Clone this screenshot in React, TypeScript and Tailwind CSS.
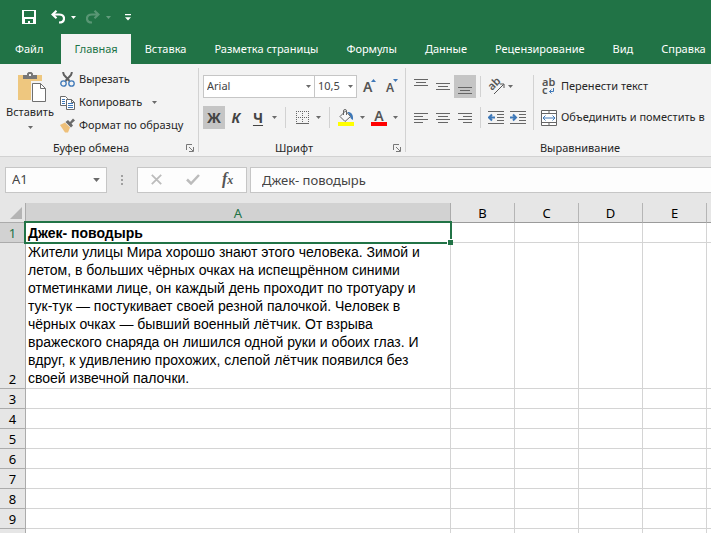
import type { ReactNode } from "react";

const tabs = [
  "Файл",
  "Главная",
  "Вставка",
  "Разметка страницы",
  "Формулы",
  "Данные",
  "Рецензирование",
  "Вид",
  "Справка",
];

const columns = ["A", "B", "C", "D", "E", "F"];
const emptyRows = [3, 4, 5, 6, 7, 8, 9, 10];

const title = "Джек- поводырь";
const story = `Жители улицы Мира хорошо знают этого человека. Зимой и
летом, в больших чёрных очках на испещрённом синими
отметинками лице, он каждый день проходит по тротуару и
тук-тук — постукивает своей резной палочкой. Человек в
чёрных очках — бывший военный лётчик. От взрыва
вражеского снаряда он лишился одной руки и обоих глаз. И
вдруг, к удивлению прохожих, слепой лётчик появился без
своей извечной палочки.`;

export default function App() {
  return (
    <div className="flex h-screen flex-col overflow-hidden bg-[#e6e6e6] font-['Noto_Sans',sans-serif] text-[11px] text-[#262626]">
      <TitleBar />
      <Tabs />
      <div className="flex h-[93px] shrink-0 overflow-hidden border-b border-[#d2d2d2] bg-[#f3f3f3] py-1">
        <ClipboardGroup />
        <FontGroup />
        <AlignGroup />
      </div>
      <FormulaBar />
      <Sheet />
    </div>
  );
}

const TitleBar = () => (
  <header className="flex h-[34px] shrink-0 items-center bg-[#217346] pl-[22px] text-white">
    <button aria-label="Сохранить">
      <svg width="14" height="14" viewBox="0 0 14 14" shapeRendering="crispEdges">
        <path
          fill="currentColor"
          fillRule="evenodd"
          d="M0 0h14v14H0zM2 1v6h10V1zM3 9v4h3v-2h2v2h3V9z"
        />
      </svg>
    </button>
    <button aria-label="Отменить" className="ml-[15px]">
      <UndoIcon />
    </button>
    <button aria-label="Список отмены" className="ml-1.5">
      <Caret />
    </button>
    <button aria-label="Вернуть" className="ml-[10px] opacity-25">
      <UndoIcon className="-scale-x-100" />
    </button>
    <button aria-label="Список возврата" className="ml-1.5 opacity-30">
      <Caret />
    </button>
    <button aria-label="Настройка панели" className="ml-[14px]">
      <svg width="6" height="7" viewBox="0 0 6 7">
        <path fill="currentColor" d="M0 0h6v1.2H0zM0 3.2h6L3 6.4z" />
      </svg>
    </button>
  </header>
);

const Tabs = () => (
  <nav className="flex h-[30px] shrink-0 overflow-hidden bg-[#217346] pl-px">
    {tabs.map((tab) => (
      <a
        key={tab}
        href="#"
        className={
          tab === "Главная"
            ? "ml-1 flex shrink-0 items-center bg-[#f3f3f3] px-[13px] text-[#217346]"
            : "flex shrink-0 items-center px-3.5 text-white"
        }
      >
        {tab}
      </a>
    ))}
  </nav>
);

const ClipboardGroup = () => (
  <Group label="Буфер обмена" className="w-[199px]" launcher>
    <div className="flex">
      <button className="flex w-[60px] flex-col items-center pt-1">
        <svg width="28" height="30" viewBox="0 0 28 30" className="ml-1">
          <path fill="#eec77f" d="M0 3h24v25H0z" />
          <path fill="#777" d="M5 3h4V1.500L10.500 0h3L15 1.500V3h4v4H5z" />
          <path fill="#f3f3f3" d="M11 2h2v2h-2zM13 9h15v21H13z" />
          <path fill="#fff" stroke="#6f6f6f" d="M14.500 11.500h8l5 5v13h-13z" />
          <path fill="none" stroke="#6f6f6f" d="M22.500 11.500v5h5" />
        </svg>
        <span className="mt-0.5 leading-4">Вставить</span>
        <Caret className="mt-1.5 text-[#6a6a6a]" />
      </button>
      <div className="flex flex-col">
        <button className="flex h-[23px] items-center gap-1">
          <svg width="15" height="15" viewBox="0 0 15 15" fill="none">
            <path stroke="#5f5f5f" strokeWidth="2" d="M3 0l1 3 5.500 6M12 0l-1 3-5.500 6" />
            <circle cx="3.500" cy="11.500" r="2.700" stroke="#3e78b8" strokeWidth="1.300" />
            <circle cx="11.500" cy="11.500" r="2.700" stroke="#3e78b8" strokeWidth="1.300" />
          </svg>
          Вырезать
        </button>
        <button className="flex h-[23px] items-center gap-1">
          <svg width="15" height="14" viewBox="0 0 15 14" fill="#fff">
            <path stroke="#6a6a6a" d="M.5.500h5l2 2v7h-7z" />
            <path stroke="#3e78b8" d="M2 3.500h3M2 5.500h3M2 7.500h3" />
            <path stroke="#6a6a6a" d="M6.500 3.500h5l3 3v7h-8z" />
            <path fill="none" stroke="#6a6a6a" d="M11.500 3.500v3h3" />
            <path stroke="#3e78b8" d="M8 7.500h5M8 9.500h5M8 11.500h5" />
          </svg>
          Копировать
          <Caret className="ml-1.5 text-[#6a6a6a]" />
        </button>
        <button className="flex h-[23px] items-center gap-1">
          <svg width="15" height="15" viewBox="0 0 15 15">
            <path fill="#eec07a" d="M0 7l5-2.500 5 5L8 14.500H5z" />
            <path fill="#6a6a6a" d="M5.500 4L8 2l2 2 3-3.500L15 2.500 11.500 5.500l1.500 2-2 2z" />
          </svg>
          Формат по образцу
        </button>
      </div>
    </div>
  </Group>
);

const FontGroup = () => (
  <Group label="Шрифт" className="w-[207px]" launcher>
    <div className="mt-[7px] ml-1 flex h-[23px] items-center">
      <Picker label="Шрифт" value="Arial" className="w-[112px]" />
      <Picker label="Размер шрифта" value="10,5" className="-ml-px w-[43px]" />
      <button aria-label="Увеличить размер" className="ml-1.5 text-[#555]">
        <svg width="14" height="17" viewBox="0 0 14 17" className="overflow-visible">
          <text x="0" y="14" fontSize="14" fontWeight="600" fill="currentColor">
            A
          </text>
          <path fill="#3e78b8" d="M8 4h5l-2.500-3z" />
        </svg>
      </button>
      <button aria-label="Уменьшить размер" className="ml-[9px] text-[#555]">
        <svg width="13" height="17" viewBox="0 0 13 17" className="overflow-visible">
          <text x="0" y="14" fontSize="12" fontWeight="600" fill="currentColor">
            A
          </text>
          <path fill="#3e78b8" d="M7 1h5L9.500 4z" />
        </svg>
      </button>
    </div>
    <div className="mt-2 ml-1 flex h-[23px] items-center text-[14px] font-bold text-[#444]">
      <button className="h-[23px] w-[22px] bg-[#c5c5c5]">Ж</button>
      <button className="w-[22px] italic">К</button>
      <button className="w-[22px] underline underline-offset-2">Ч</button>
      <CaretButton label="Вид подчёркивания" />
      <Divider className="mx-[5px]" />
      <IconButton label="Границы">
        <svg width="13" height="13" viewBox="0 0 13 13" fill="none" stroke="#666">
          <path strokeDasharray="1 1" d="M0 .5h13M0 6.500h13M.5 0v13M6.500 0v13M12.500 0v13" />
          <path d="M0 12.500h13" />
        </svg>
      </IconButton>
      <CaretButton label="Виды границ" />
      <Divider className="mx-[5px]" />
      <IconButton label="Цвет заливки">
        <svg width="16" height="17" viewBox="0 0 16 17">
          <path fill="#3e78b8" d="M9.500 3c4 0 6 2.500 5.500 8-2-1-3-2.500-3-4z" />
          <path fill="#f8f8f8" stroke="#666" d="M2 7.500L7.500 2l5 5.500-5.500 5z" />
          <path fill="none" stroke="#666" d="M5.500 6V2q0-1.500 1.500-1.500T8.500 2v4" />
          <path fill="#ff0" d="M0 13h16v4H0z" />
        </svg>
      </IconButton>
      <CaretButton label="Цвета заливки" />
      <IconButton label="Цвет текста">
        <svg width="16" height="17" viewBox="0 0 16 17" className="overflow-visible">
          <text x="8" y="12" fontSize="14" fontWeight="600" textAnchor="middle" fill="#555">
            A
          </text>
          <path fill="red" d="M0 13h16v4H0z" />
        </svg>
      </IconButton>
      <CaretButton label="Цвета текста" />
    </div>
  </Group>
);

const AlignGroup = () => (
  <Group label="Выравнивание" className="w-[349px]">
    <div className="mt-[7px] ml-1 flex">
      <div>
        <div className="flex h-[23px] items-center">
          <IconButton label="По верхнему краю">
            <Lines d="M0 .5h14M2 3.500h10M0 6.500h14" className="mb-2" />
          </IconButton>
          <IconButton label="По середине">
            <Lines d="M0 .5h14M2 3.500h10M0 6.500h14" />
          </IconButton>
          <IconButton label="По нижнему краю" active>
            <Lines d="M0 .5h14M2 3.500h10M0 6.500h14" className="mt-2" />
          </IconButton>
          <Divider className="mx-1" />
          <IconButton label="Ориентация">
            <svg width="18" height="16" viewBox="0 0 18 16" fill="none" stroke="#555" className="overflow-visible">
              <text
                fontSize="11"
                fontWeight="600"
                stroke="none"
                fill="#555"
                transform="translate(5 12) rotate(-45)"
              >
                ab
              </text>
              <path d="M7 15L16.500 5.500M13 5h4v4" />
            </svg>
          </IconButton>
          <Caret className="ml-px text-[#6a6a6a]" />
        </div>
        <div className="mt-2 flex h-[23px] items-center">
          <IconButton label="По левому краю">
            <Lines d="M0 .5h14M0 3.500h9M0 6.500h14M0 9.500h9" />
          </IconButton>
          <IconButton label="По центру">
            <Lines d="M0 .5h14M2 3.500h10M0 6.500h14M2 9.500h10" />
          </IconButton>
          <IconButton label="По правому краю">
            <Lines d="M0 .5h14M5 3.500h9M0 6.500h14M5 9.500h9" />
          </IconButton>
          <Divider className="mx-1" />
          <IconButton label="Уменьшить отступ">
            <svg width="16" height="13" viewBox="0 0 16 13" fill="none" stroke="#666">
              <path d="M0 .5h16M9 3.500h7M9 6.500h7M9 9.500h7M0 12.500h16" />
              <path stroke="#3e78b8" strokeWidth="2" d="M7 6.500H1.500M4 3.500l-3 3 3 3" />
            </svg>
          </IconButton>
          <IconButton label="Увеличить отступ">
            <svg width="16" height="13" viewBox="0 0 16 13" fill="none" stroke="#666">
              <path d="M0 .5h16M9 3.500h7M9 6.500h7M9 9.500h7M0 12.500h16" />
              <path stroke="#3e78b8" strokeWidth="2" d="M0 6.500h5.500M3 3.500l3 3-3 3" />
            </svg>
          </IconButton>
        </div>
      </div>
      <div className="ml-1 h-[55px] w-px bg-[#d2d2d2]" />
      <div className="ml-[7px] whitespace-nowrap">
        <button className="flex h-[23px] items-center gap-1">
          <svg width="16" height="17" viewBox="0 0 16 17" fill="none" className="overflow-visible">
            <text fontSize="11" fontWeight="600" fill="#555">
              <tspan x="1" y="8">ab</tspan>
              <tspan x="1" y="16">c</tspan>
            </text>
            <path stroke="#3e78b8" d="M12.500 10v3.500H8.500M10.500 11.500l-2 2 2 2" />
          </svg>
          Перенести текст
        </button>
        <button className="mt-2 flex h-[23px] items-center gap-1">
          <svg width="16" height="16" viewBox="0 0 16 16" fill="none" stroke="#666">
            <path fill="#fff" d="M.5.500h15v15H.5z" />
            <path d="M0 3.500h16M0 12.500h16M8 0v4M8 12v4" />
            <path stroke="#3e78b8" d="M2.500 8h11M4.500 5.500L2 8l2.500 2.500M11.500 5.500L14 8l-2.500 2.500" />
          </svg>
          Объединить и поместить в
        </button>
      </div>
    </div>
  </Group>
);

const FormulaBar = () => (
  <div className="flex h-[46px] shrink-0 items-center pb-px pl-[5px] text-[13px] text-[#444]">
    <div className="flex h-[26px] w-[102px] shrink-0 items-center border border-[#c6c6c6] bg-[#fdfdfd] px-1.5">
      <input aria-label="Имя ячейки" defaultValue="A1" className="w-full min-w-0 outline-none" />
      <button aria-label="Список имён" className="text-[#6a6a6a]">
        <Caret big />
      </button>
    </div>
    <svg width="2" height="10" viewBox="0 0 2 10" className="ml-3.5 shrink-0">
      <path fill="#a0a0a0" d="M0 0h2v2H0zM0 4h2v2H0zM0 8h2v2H0z" />
    </svg>
    <div className="ml-3.5 flex h-[26px] w-[110px] shrink-0 items-center border border-[#c6c6c6] bg-[#fdfdfd]">
      <button aria-label="Отмена" className="ml-[13px] text-[#bcbcbc]">
        <svg width="11" height="11" viewBox="0 0 11 11">
          <path stroke="currentColor" strokeWidth="1.800" d="M.8.800l9.400 9.400M10.200.800L.8 10.200" />
        </svg>
      </button>
      <button aria-label="Ввод" className="ml-6 text-[#bcbcbc]">
        <svg width="14" height="11" viewBox="0 0 14 11">
          <path fill="none" stroke="currentColor" strokeWidth="2.500" d="M1 5.500l4 4L13 1" />
        </svg>
      </button>
      <button
        aria-label="Вставить функцию"
        className="ml-[22px] font-['Liberation_Serif',serif] text-[16px] leading-4 font-bold text-[#555] italic"
      >
        f<span className="text-[12px]">x</span>
      </button>
    </div>
    <input
      aria-label="Строка формул"
      defaultValue={title}
      className="ml-[3px] h-[26px] min-w-0 flex-1 border border-r-0 border-[#c6c6c6] bg-[#fdfdfd] px-[11px] outline-none"
    />
  </div>
);

const Sheet = () => (
  <table className="w-full shrink-0 table-fixed border-separate border-spacing-0 bg-white text-[13px] leading-4 text-black">
    <colgroup>
      <col className="w-[26px]" />
      <col className="w-[425px]" />
      <col className="w-16" />
      <col className="w-16" />
      <col className="w-16" />
      <col className="w-16" />
      <col />
    </colgroup>
    <thead>
      <tr className="h-5">
        <th className="border-r border-b border-[#ababab] bg-[#e6e6e6] p-0">
          <svg width="12" height="12" viewBox="0 0 12 12" className="mr-[3px] ml-auto">
            <path fill="#b4b4b4" d="M12 0v12H0z" />
          </svg>
        </th>
        {columns.map((col) => (
          <th
            key={col}
            scope="col"
            className={
              col === "A"
                ? "border-r border-b border-[#9b9b9b] border-r-[#ababab] bg-[#d2d2d2] p-0 font-normal text-[#217346]"
                : "border-r border-b border-[#9b9b9b] border-r-[#b5b5b5] bg-[#e6e6e6] p-0 font-normal last:border-r-0"
            }
          >
            {col === "F" ? "" : col}
          </th>
        ))}
      </tr>
    </thead>
    <tbody>
      <tr className="h-5">
        <RowHeader n={1} active />
        <td className="relative border-r border-b border-[#d4d4d4] p-0 pl-[2px] font-['Liberation_Sans',sans-serif] text-[14px] font-bold">
          {title}
          <div className="absolute -inset-0.5 border-2 border-[#217346]">
            <div className="absolute -right-[3px] -bottom-[3px] h-1.5 w-1.5 border-t border-l border-white bg-[#217346]" />
          </div>
        </td>
        <EmptyCells />
      </tr>
      <tr className="h-[146px]">
        <RowHeader n={2} />
        <td className="border-r border-b border-[#d4d4d4] p-0 pl-[2px] align-top font-['Liberation_Sans',sans-serif] text-[14px] leading-[18px] whitespace-pre-line">
          {story}
        </td>
        <EmptyCells />
      </tr>
      {emptyRows.map((n) => (
        <tr key={n} className="h-5">
          <RowHeader n={n} />
          <td className="border-r border-b border-[#d4d4d4] p-0" />
          <EmptyCells />
        </tr>
      ))}
    </tbody>
  </table>
);

const RowHeader = ({ n, active }: { n: number; active?: boolean }) => (
  <th
    scope="row"
    className={
      active
        ? "border-r border-b border-[#ababab] bg-[#d2d2d2] p-0 font-normal text-[#217346]"
        : "border-r border-b border-[#ababab] bg-[#e6e6e6] p-0 pb-px align-bottom font-normal"
    }
  >
    {n > 9 ? "" : n}
  </th>
);

const EmptyCells = () => (
  <>
    {columns.slice(1).map((col) => (
      <td key={col} className="border-r border-b border-[#d4d4d4] p-0 last:border-r-0" />
    ))}
  </>
);

type GroupProps = {
  label: string;
  className: string;
  launcher?: boolean;
  children: ReactNode;
};

const Group = ({ label, className, launcher, children }: GroupProps) => (
  <section className={`${className} flex shrink-0 flex-col border-r border-[#d2d2d2]`}>
    <div className="flex-1">{children}</div>
    <div className="-mb-1 flex h-4 shrink-0 items-center">
      <span className="flex-1 text-center leading-4">{label}</span>
      {launcher && (
        <button aria-label={`${label}: параметры`} className="mx-1">
          <svg width="8" height="8" viewBox="0 0 8 8" fill="none" stroke="#777">
            <path d="M.5 6V.5H6M3 3l4 4M7.500 3v4.500H3" />
          </svg>
        </button>
      )}
    </div>
  </section>
);

type PickerProps = { label: string; value: string; className: string };

const Picker = ({ label, value, className }: PickerProps) => (
  <div className={`${className} relative h-[23px] shrink-0`}>
    <select
      aria-label={label}
      className="h-full w-full appearance-none border border-[#c6c6c6] bg-white pl-[3px] text-[#444]"
    >
      <option>{value}</option>
    </select>
    <Caret className="pointer-events-none absolute top-[10px] right-1 text-[#6a6a6a]" />
  </div>
);

type IconButtonProps = { label: string; active?: boolean; children: ReactNode };

const IconButton = ({ label, active, children }: IconButtonProps) => (
  <button
    aria-label={label}
    className={
      active
        ? "flex h-[23px] w-[22px] shrink-0 items-center justify-center bg-[#c5c5c5]"
        : "flex h-[23px] w-[22px] shrink-0 items-center justify-center"
    }
  >
    {children}
  </button>
);

const CaretButton = ({ label }: { label: string }) => (
  <button aria-label={label} className="flex h-[23px] w-[11px] items-center justify-center text-[#6a6a6a]">
    <Caret />
  </button>
);

const Divider = ({ className }: { className: string }) => (
  <div className={`${className} h-[21px] w-px shrink-0 bg-[#d2d2d2]`} />
);

const Lines = ({ d, className }: { d: string; className?: string }) => (
  <svg width="14" height={d.includes("9.500h") ? 10 : 7} className={className} stroke="#666">
    <path d={d} />
  </svg>
);

const Caret = ({ className = "", big }: { className?: string; big?: boolean }) => (
  <svg
    width={big ? 7 : 5}
    height={big ? 4 : 3}
    viewBox="0 0 5 3"
    className={`${className} shrink-0`}
    fill="currentColor"
  >
    <path d="M0 0h5L2.500 3z" />
  </svg>
);

const UndoIcon = ({ className }: { className?: string }) => (
  <svg width="14" height="14" viewBox="0 0 14 14" className={className} fill="none" stroke="currentColor" strokeWidth="2.200">
    <path d="M5.500.800L1.500 4.500l4 3.700M1.500 4.500H8c3 0 5 1.500 5 4s-2 4-5 4" />
  </svg>
);
